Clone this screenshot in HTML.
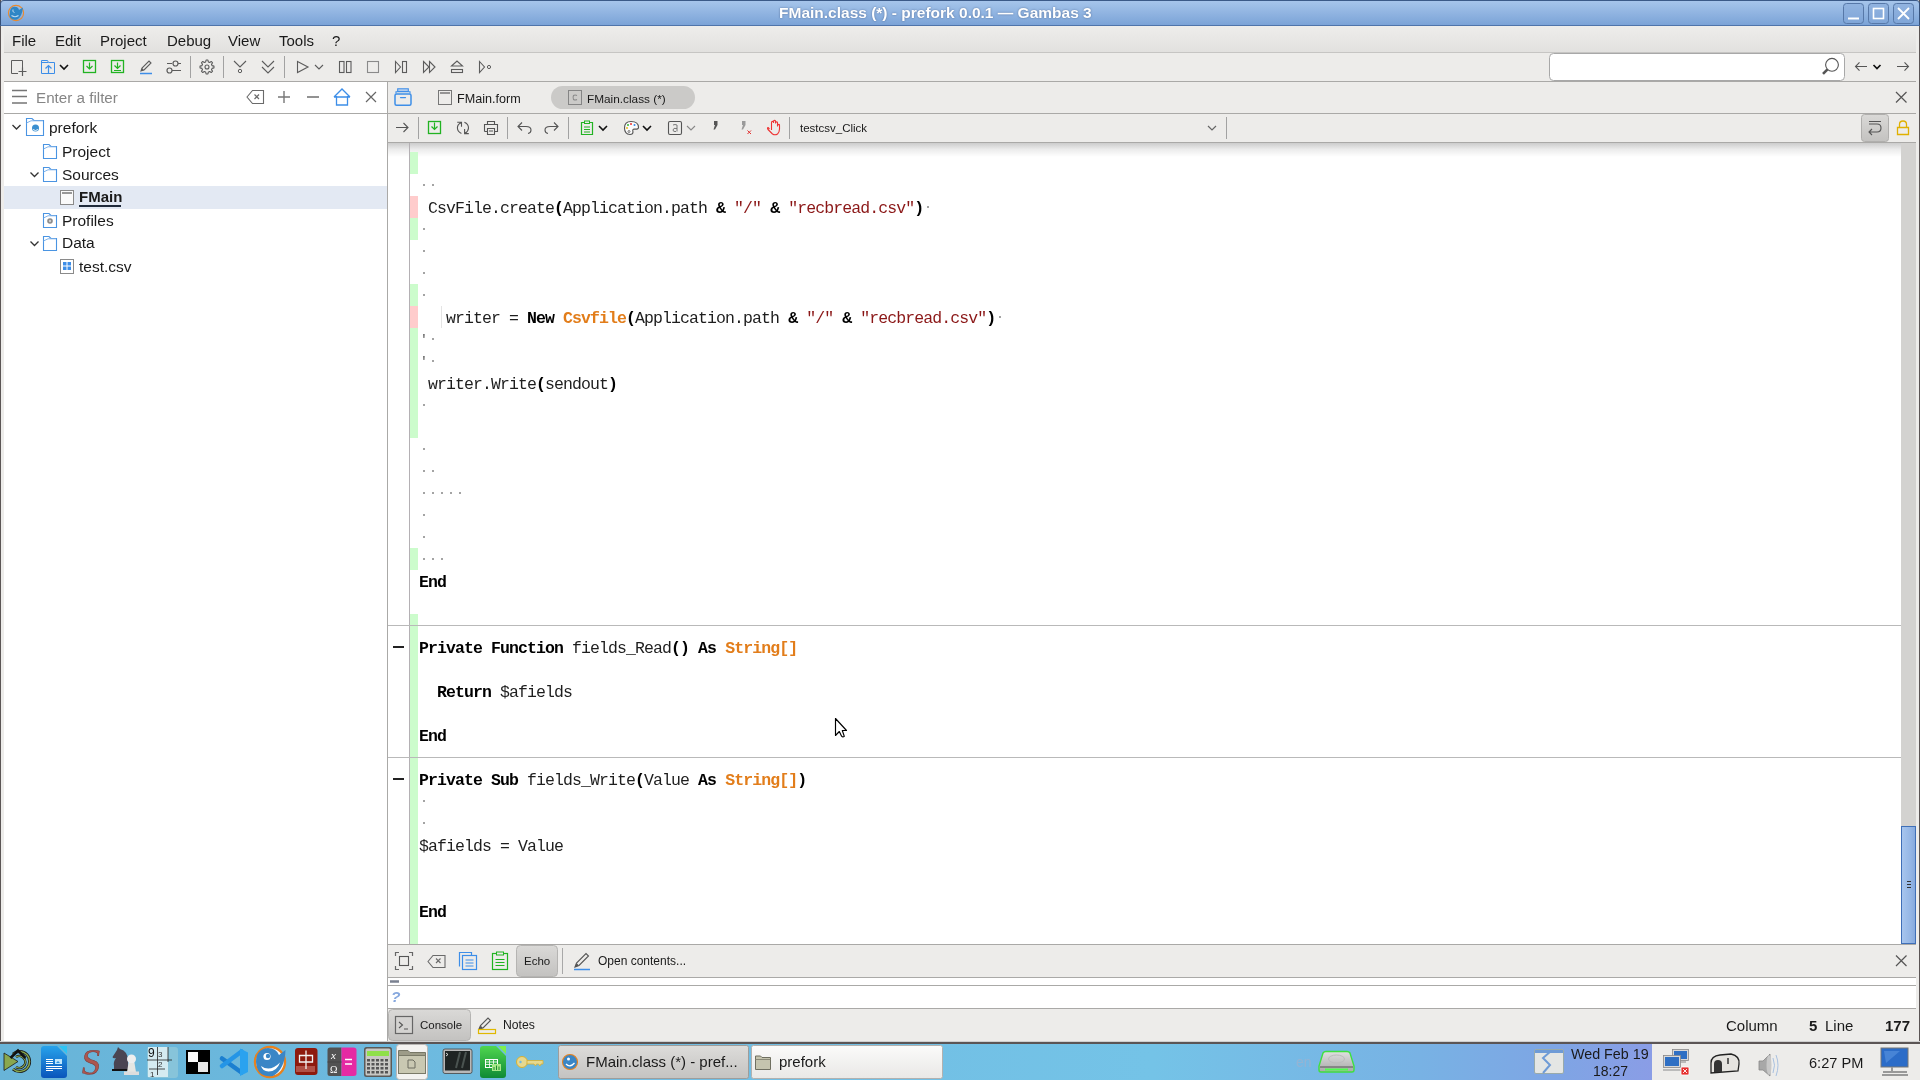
<!DOCTYPE html>
<html><head><meta charset="utf-8">
<style>
*{margin:0;padding:0;box-sizing:border-box}
html,body{width:1920px;height:1080px;overflow:hidden;background:#edecea;font-family:"Liberation Sans",sans-serif;position:relative}
.a{position:absolute}
.t,.code{will-change:transform}
.t{position:absolute;white-space:pre;font-size:15px;color:#1a1a1a;line-height:18px}
.hl{position:absolute;height:1px;background:#aaa9a7}
.vl{position:absolute;width:1px;background:#aaa9a7}
.code{position:absolute;font-family:"Liberation Mono",monospace;font-size:16.5px;letter-spacing:-0.9px;white-space:pre;line-height:22px;padding-top:2px;color:#1e1e1e;left:419px}
.code b{font-weight:bold;color:#000}
.code i{font-style:normal}
.code .s{color:#8b1717}
.code .q{color:#555;font-size:13px;position:relative;top:-2px;left:1px}
.code .o{color:#e27d1a;font-weight:bold}
.tk{position:absolute;top:1044px;height:36px}
</style></head><body>
<!-- window frame -->
<div class="a" style="left:0;top:0;width:1920px;height:1044px;background:#edecea;border-left:1px solid #5b5555;border-right:1px solid #5b5555"></div>
<div class="a" style="left:0;top:0;width:1920px;height:26px;background:linear-gradient(#a6c5eb,#7ba3d7);border-top:1px solid #3b5a88;border-bottom:1px solid #4f74aa;border-left:1px solid #34507a;border-right:1px solid #34507a;border-top-left-radius:4px;border-top-right-radius:4px"></div>
<div class="t" style="left:779px;top:4px;font-size:15.5px;font-weight:bold;color:#fff;text-shadow:0 0 2px rgba(40,60,100,.6)">FMain.class (*) - prefork 0.0.1 — Gambas 3</div>

<div class="a" style="left:4px;top:26px;width:1912px;height:27px;background:linear-gradient(#eeedeb,#e2e1df);border-bottom:1px solid #c6c5c3"></div>
<div class="t" style="left:12px;top:32px">File</div>
<div class="t" style="left:55px;top:32px">Edit</div>
<div class="t" style="left:100px;top:32px">Project</div>
<div class="t" style="left:167px;top:32px">Debug</div>
<div class="t" style="left:228px;top:32px">View</div>
<div class="t" style="left:279px;top:32px">Tools</div>
<div class="t" style="left:332px;top:32px">?</div>

<!-- left panel -->
<div class="a" style="left:4px;top:82px;width:383px;height:959px;background:#fff"></div>
<div class="hl" style="left:4px;top:113px;width:383px"></div>
<div class="hl" style="left:4px;top:81px;width:1912px"></div>
<div class="vl" style="left:387px;top:82px;height:959px"></div>
<div class="a" style="left:4px;top:186px;width:383px;height:23px;background:#e3e9f3"></div>

<!-- right area -->
<div class="hl" style="left:388px;top:113px;width:1528px"></div>
<div class="hl" style="left:388px;top:142px;width:1528px"></div>
<div class="a" style="left:388px;top:143px;width:1513px;height:801px;background:#fff"></div>
<div class="a" style="left:1901px;top:143px;width:15px;height:801px;background:#d3d2d0"></div>
<div class="a" style="left:388px;top:143px;width:1513px;height:14px;background:linear-gradient(rgba(0,0,0,.20),rgba(0,0,0,.08) 45%,rgba(0,0,0,0))"></div>
<div class="vl" style="left:409px;top:143px;height:801px;background:#b4b0b4"></div>
<div class="a" style="left:410px;top:152px;width:8px;height:22px;background:#ccfccc"></div>
<div class="a" style="left:410px;top:196px;width:8px;height:22px;background:#ffcccc"></div>
<div class="a" style="left:410px;top:218px;width:8px;height:22px;background:#ccfccc"></div>
<div class="a" style="left:410px;top:284px;width:8px;height:22px;background:#ccfccc"></div>
<div class="a" style="left:410px;top:306px;width:8px;height:22px;background:#ffcccc"></div>
<div class="a" style="left:410px;top:328px;width:8px;height:110px;background:#ccfccc"></div>
<div class="a" style="left:410px;top:548px;width:8px;height:22px;background:#ccfccc"></div>
<div class="a" style="left:410px;top:614px;width:8px;height:330px;background:#ccfccc"></div>
<div class="a" style="left:423px;top:184px;width:2px;height:2px;background:#a4a4a4"></div>
<div class="a" style="left:432px;top:184px;width:2px;height:2px;background:#a4a4a4"></div>
<div class="a" style="left:423px;top:228px;width:2px;height:2px;background:#a4a4a4"></div>
<div class="a" style="left:423px;top:250px;width:2px;height:2px;background:#a4a4a4"></div>
<div class="a" style="left:423px;top:272px;width:2px;height:2px;background:#a4a4a4"></div>
<div class="a" style="left:423px;top:294px;width:2px;height:2px;background:#a4a4a4"></div>
<div class="a" style="left:432px;top:338px;width:2px;height:2px;background:#a4a4a4"></div>
<div class="a" style="left:432px;top:360px;width:2px;height:2px;background:#a4a4a4"></div>
<div class="a" style="left:423px;top:404px;width:2px;height:2px;background:#a4a4a4"></div>
<div class="a" style="left:423px;top:448px;width:2px;height:2px;background:#a4a4a4"></div>
<div class="a" style="left:423px;top:470px;width:2px;height:2px;background:#a4a4a4"></div>
<div class="a" style="left:432px;top:470px;width:2px;height:2px;background:#a4a4a4"></div>
<div class="a" style="left:423px;top:492px;width:2px;height:2px;background:#a4a4a4"></div>
<div class="a" style="left:432px;top:492px;width:2px;height:2px;background:#a4a4a4"></div>
<div class="a" style="left:441px;top:492px;width:2px;height:2px;background:#a4a4a4"></div>
<div class="a" style="left:450px;top:492px;width:2px;height:2px;background:#a4a4a4"></div>
<div class="a" style="left:459px;top:492px;width:2px;height:2px;background:#a4a4a4"></div>
<div class="a" style="left:423px;top:514px;width:2px;height:2px;background:#a4a4a4"></div>
<div class="a" style="left:423px;top:536px;width:2px;height:2px;background:#a4a4a4"></div>
<div class="a" style="left:423px;top:558px;width:2px;height:2px;background:#a4a4a4"></div>
<div class="a" style="left:432px;top:558px;width:2px;height:2px;background:#a4a4a4"></div>
<div class="a" style="left:441px;top:558px;width:2px;height:2px;background:#a4a4a4"></div>
<div class="a" style="left:423px;top:800px;width:2px;height:2px;background:#a4a4a4"></div>
<div class="a" style="left:423px;top:822px;width:2px;height:2px;background:#a4a4a4"></div>
<div class="a" style="left:927px;top:206px;width:2px;height:2px;background:#a4a4a4"></div>
<div class="a" style="left:999px;top:316px;width:2px;height:2px;background:#a4a4a4"></div>
<div class="code" style="top:196px"> CsvFile.create<b>(</b>Application.path <b>&amp;</b> <i class="s">"/"</i> <b>&amp;</b> <i class="s">"recbread.csv"</i><b>)</b></div>
<div class="code" style="top:306px">   writer = <b>New</b> <i class="o">Csvfile</i><b>(</b>Application.path <b>&amp;</b> <i class="s">"/"</i> <b>&amp;</b> <i class="s">"recbread.csv"</i><b>)</b></div>
<div class="code" style="top:328px"><i class="q">'</i></div>
<div class="code" style="top:350px"><i class="q">'</i></div>
<div class="code" style="top:372px"> writer.Write<b>(</b>sendout<b>)</b></div>
<div class="code" style="top:570px"><b>End</b></div>
<div class="code" style="top:636px"><b>Private</b> <b>Function</b> fields_Read<b>()</b> <b>As</b> <i class="o">String[]</i></div>
<div class="code" style="top:680px">  <b>Return</b> $afields</div>
<div class="code" style="top:724px"><b>End</b></div>
<div class="code" style="top:768px"><b>Private</b> <b>Sub</b> fields_Write<b>(</b>Value <b>As</b> <i class="o">String[]</i><b>)</b></div>
<div class="code" style="top:834px">$afields = Value</div>
<div class="code" style="top:900px"><b>End</b></div>
<div class="a" style="left:441px;top:306px;width:1px;height:22px;background:#e4e4e4"></div>
<div class="a" style="left:388px;top:625px;width:1513px;height:1px;background:#b9b9b9"></div>
<div class="a" style="left:388px;top:757px;width:1513px;height:1px;background:#b9b9b9"></div>
<div class="a" style="left:393px;top:646px;width:11px;height:2px;background:#222"></div>
<div class="a" style="left:393px;top:778px;width:11px;height:2px;background:#222"></div>

<div class="hl" style="left:388px;top:944px;width:1528px"></div>
<div class="hl" style="left:388px;top:977px;width:1528px"></div>
<div class="a" style="left:388px;top:978px;width:1528px;height:30px;background:#fff"></div>
<div class="hl" style="left:388px;top:985px;width:1528px"></div>
<div class="hl" style="left:388px;top:1008px;width:1528px"></div>

<!-- taskbar -->
<div class="a" style="left:0;top:1041px;width:1920px;height:3px;background:#5b5555;border-top:1px solid #cfcfcf"></div>
<div class="a" style="left:0;top:1044px;width:1920px;height:36px;background:linear-gradient(90deg,#68b4d8 0%,#6fbce2 30%,#74c3e7 60%,#78b2e4 74%,#7ea5e4 81%,#8a9de6 86%)"></div>
<div class="a" style="left:1652px;top:1044px;width:268px;height:36px;background:#edecea"></div>

<svg class="a" style="left:0;top:0" width="1920" height="1080" viewBox="0 0 1920 1080"><defs>
<linearGradient id="btng" x1="0" y1="0" x2="0" y2="1"><stop offset="0" stop-color="#dad9d7"/><stop offset="1" stop-color="#c3c2c0"/></linearGradient>
<linearGradient id="thumbg" x1="0" y1="0" x2="1" y2="0"><stop offset="0" stop-color="#a8c6ee"/><stop offset=".6" stop-color="#96b7e6"/><stop offset="1" stop-color="#85a8dc"/></linearGradient>
</defs><path d="M11.5 73.5V60.5H22.5V68M11.5 73.5H18" stroke="#5c5c5c" fill="none"/>
<path d="M22.5 67.5V76M18.5 71.5H26.5" stroke="#5c5c5c" stroke-width="1.2" fill="none"/>
<path d="M41.5 73.5V60.5H47.5L48.5 62.5H54.5V73.5Z" stroke="#3d8ee8" fill="none"/><path d="M41.5 62.5H48" stroke="#3d8ee8" fill="none"/>
<path d="M48.5 73.5V66M45.5 68.5L48.5 65.5L51.5 68.5" stroke="#3d8ee8" stroke-width="1.2" fill="none"/>
<path d="M60 65L64 69L68 65" stroke="#111" stroke-width="1.6" fill="none"/>
<rect x="83.5" y="60.5" width="12" height="12" stroke="#22b322" stroke-width="1.3" fill="none"/>
<path d="M89.5 62.5V69M86.5 66L89.5 69L92.5 66" stroke="#22b322" stroke-width="1.2" fill="none"/>
<rect x="111.5" y="60.5" width="12" height="12" stroke="#22b322" stroke-width="1.3" fill="none"/>
<path d="M117.5 62.5V68M114.5 65.5L117.5 68.5L120.5 65.5M114 70.5H121" stroke="#22b322" stroke-width="1.2" fill="none"/>
<path d="M141 71L142 68L149 61L151 63L144 70Z" stroke="#5c5c5c" stroke-width="1.1" fill="none"/><path d="M141 71L142 68L144 70Z" fill="#5c5c5c"/>
<path d="M140 73.5H152" stroke="#3d8ee8" stroke-width="1.5"/>
<path d="M167 63.5H172M178 63.5H181M172 70.5H181" stroke="#5c5c5c" stroke-width="1.2" fill="none"/><circle cx="175.5" cy="63.5" r="2.5" stroke="#5c5c5c" stroke-width="1.2" fill="none"/><circle cx="169.5" cy="70.5" r="2.5" stroke="#5c5c5c" stroke-width="1.2" fill="none"/>
<path d="M190.5 56V78" stroke="#a2a2a2"/>
<path d="M223.5 56V78" stroke="#a2a2a2"/>
<path d="M284.5 56V78" stroke="#a2a2a2"/>
<path d="M214.00 67.00 L213.94 67.91 L212.02 68.35 L211.80 68.99 L211.50 69.60 L212.55 71.26 L211.95 71.95 L211.26 72.55 L209.60 71.50 L208.99 71.80 L208.35 72.02 L207.91 73.94 L207.00 74.00 L206.09 73.94 L205.65 72.02 L205.01 71.80 L204.40 71.50 L202.74 72.55 L202.05 71.95 L201.45 71.26 L202.50 69.60 L202.20 68.99 L201.98 68.35 L200.06 67.91 L200.00 67.00 L200.06 66.09 L201.98 65.65 L202.20 65.01 L202.50 64.40 L201.45 62.74 L202.05 62.05 L202.74 61.45 L204.40 62.50 L205.01 62.20 L205.65 61.98 L206.09 60.06 L207.00 60.00 L207.91 60.06 L208.35 61.98 L208.99 62.20 L209.60 62.50 L211.26 61.45 L211.95 62.05 L212.55 62.74 L211.50 64.40 L211.80 65.01 L212.02 65.65 L213.94 66.09Z" stroke="#5c5c5c" stroke-width="1.1" fill="none" stroke-linejoin="round"/><circle cx="207" cy="67" r="2" stroke="#5c5c5c" stroke-width="1.1" fill="none"/>
<path d="M234 61L240 67L246 61" stroke="#5c5c5c" stroke-width="1.1" fill="none"/><circle cx="240" cy="71" r="1.7" stroke="#5c5c5c" fill="none"/>
<path d="M262 61L268 67L274 61M262 67L268 73L274 67" stroke="#5c5c5c" stroke-width="1.1" fill="none"/>
<path d="M297.5 61.5L308 67L297.5 72.5Z" stroke="#5c5c5c" stroke-width="1.1" fill="none"/>
<path d="M315 65L319 69L323 65" stroke="#5c5c5c" stroke-width="1.1" fill="none"/>
<rect x="339.5" y="61.5" width="4.5" height="11" stroke="#5c5c5c" stroke-width="1.1" fill="none"/><rect x="346.5" y="61.5" width="4.5" height="11" stroke="#5c5c5c" stroke-width="1.1" fill="none"/>
<rect x="367.5" y="61.5" width="11" height="11" stroke="#8a8a8a" stroke-width="1.1" fill="none"/>
<path d="M395.5 61.5L400.5 67L395.5 72.5Z" stroke="#5c5c5c" stroke-width="1.1" fill="none"/><rect x="402.5" y="61.5" width="4" height="11" stroke="#5c5c5c" stroke-width="1.1" fill="none"/>
<path d="M423.5 61.5L429 67L423.5 72.5ZM429.5 61.5L435 67L429.5 72.5Z" stroke="#5c5c5c" stroke-width="1.1" fill="none"/>
<path d="M451.5 66L457 61L462.5 66Z" stroke="#5c5c5c" stroke-width="1.1" fill="none"/><rect x="451.5" y="69.5" width="11" height="3" stroke="#5c5c5c" stroke-width="1.1" fill="none"/>
<path d="M479.5 61.5L484.5 67L479.5 72.5Z" stroke="#5c5c5c" stroke-width="1.1" fill="none"/><circle cx="489" cy="67" r="1.6" stroke="#5c5c5c" fill="none"/>
<rect x="1549.5" y="53.5" width="295" height="27" rx="4" fill="#fff" stroke="#a8a8a8"/>
<circle cx="1832" cy="64.8" r="6.4" stroke="#555" stroke-width="1.1" fill="none"/><path d="M1827.5 69.3L1823 73.8" stroke="#555" stroke-width="2.6"/>
<path d="M1855.5 66.5H1867M1859.5 62.3L1855.5 66.5L1859.5 70.7" stroke="#555" stroke-width="1.1" fill="none"/>
<path d="M1873.5 65L1877 68.5L1880.5 65" stroke="#111" stroke-width="1.7" fill="none"/>
<path d="M1897 66.5H1908.5M1904.5 62.3L1908.5 66.5L1904.5 70.7" stroke="#555" stroke-width="1.1" fill="none"/>
<rect x="1843.5" y="3.5" width="20" height="20" rx="3" fill="rgba(130,165,215,.5)" stroke="#5778a8"/>
<rect x="1868.5" y="3.5" width="20" height="20" rx="3" fill="rgba(130,165,215,.5)" stroke="#5778a8"/>
<rect x="1893.5" y="3.5" width="20" height="20" rx="3" fill="rgba(130,165,215,.5)" stroke="#5778a8"/>
<path d="M1848 18.5H1859" stroke="#fff" stroke-width="2"/>
<rect x="1873.5" y="8.5" width="10" height="10" stroke="#fff" stroke-width="1.6" fill="none"/>
<path d="M1898 8L1909 19M1909 8L1898 19" stroke="#fff" stroke-width="1.8"/>
<circle cx="16" cy="13" r="7.6" fill="none" stroke="#ea8a2e" stroke-width="1.1"/><path d="M10 11Q11 6.5 15 6.8Q18.5 7.2 19 10L23 7.5Q22 17 17 19.5Q11 20.5 9.5 16Z" fill="#2f86c6"/><path d="M13 9.5Q12 12 14.5 12.5" stroke="#bcd8f0" stroke-width="1" fill="none"/><path d="M11.5 15.5Q15 18 18.5 15.5" stroke="#bcd8f0" stroke-width="1.1" fill="none"/>
<path d="M12 90.5H27M12 96.5H27M12 103H27" stroke="#757575" stroke-width="1.6"/>
<path d="M247 97L252.5 90.5H263.5V103.5H252.5Z" stroke="#6a6a6a" stroke-width="1.1" fill="none"/><path d="M254.5 94.5L259 99M259 94.5L254.5 99" stroke="#6a6a6a" stroke-width="1.2"/>
<path d="M284 91V103M278 97H290" stroke="#777" stroke-width="1.4"/>
<path d="M307 97H319" stroke="#777" stroke-width="1.6"/>
<path d="M334 97L342 89L350 97M336.5 96V105H347.5V96M334 97H350" stroke="#3d8ee8" stroke-width="1.3" fill="none"/>
<path d="M366 92L376 102M376 92L366 102" stroke="#666" stroke-width="1.2"/>
<rect x="395" y="94" width="16" height="11.3" rx="1.5" stroke="#3d8ee8" stroke-width="1.5" fill="none"/><path d="M396 93.5V91.8H410V93.5" stroke="#3d8ee8" stroke-width="1.1" fill="none"/><rect x="397.7" y="88.8" width="10.6" height="2.6" stroke="#3d8ee8" stroke-width="1.1" fill="#c6d8ee"/><path d="M400.5 97.6H405.5" stroke="#3d8ee8" stroke-width="1.2" stroke-linecap="round"/>
<rect x="438.5" y="90.5" width="13" height="14" stroke="#777" fill="none"/><path d="M440 93H450" stroke="#777" stroke-width="1.5"/>
<rect x="551" y="86" width="144" height="23" rx="11.5" fill="#cbcac8"/>
<rect x="568.5" y="90.5" width="13" height="14" stroke="#858585" fill="none"/><path d="M577 95.5Q575 94.5 573.5 95.5Q572.5 97.5 573.5 99.5Q575 100.5 577 99.5" stroke="#8a8a8a" stroke-width="1.1" fill="none"/>
<path d="M1896 92L1906.5 102.5M1906.5 92L1896 102.5" stroke="#555" stroke-width="1.2"/>
<path d="M396 127.5H408M403.5 123L408 127.5L403.5 132" stroke="#555" stroke-width="1.1" fill="none"/>
<path d="M418.5 117V139" stroke="#a2a2a2"/>
<path d="M507.5 117V139" stroke="#a2a2a2"/>
<path d="M568.5 117V139" stroke="#a2a2a2"/>
<rect x="428.5" y="121.5" width="12" height="12" stroke="#22b322" stroke-width="1.3" fill="none"/><path d="M434.5 122.5V129.5M431.5 126.5L434.5 129.5L437.5 126.5" stroke="#22b322" stroke-width="1.2" fill="none"/>
<path d="M457.2 122.3H461.5V126.7M461.2 122.6Q457.4 124.5 457.4 128Q457.6 131.8 461.4 133.4M464.4 122.3Q468.5 124 468.5 128Q468.3 131.5 465 133.3M464.6 129V133.6H468.8" stroke="#555" stroke-width="1.1" fill="none"/>
<path d="M487.5 124.5V121.5H494.5V124.5M484.5 131.5V124.5H497.5V131.5H494.5M487.5 131.5H484.5M487.5 128.5H494.5V134.5H487.5ZM489 131H493" stroke="#555" stroke-width="1.1" fill="none"/>
<path d="M518 126.5H526Q531 126.5 531 130Q531 133 528 133.5M522 122.5L518 126.5L522 130.5" stroke="#555" stroke-width="1.1" fill="none"/>
<path d="M558 126.5H550Q545 126.5 545 130Q545 133 548 133.5M554 122.5L558 126.5L554 130.5" stroke="#555" stroke-width="1.1" fill="none"/>
<path d="M581.5 122.5H592.5V134.5H581.5Z" stroke="#22b322" stroke-width="1.2" fill="none"/><rect x="584.5" y="121" width="5" height="2.5" stroke="#22b322" fill="#edecea"/><path d="M584 127H590M584 129.5H590M584 132H590" stroke="#22b322" stroke-width="1"/>
<path d="M599 126L603 130L607 126" stroke="#111" stroke-width="1.6" fill="none"/>
<path d="M643 126L647 130L651 126" stroke="#111" stroke-width="1.6" fill="none"/>
<path d="M687 126L691 130L695 126" stroke="#888" stroke-width="1.1" fill="none"/>
<path d="M631 121.5Q638.5 121.5 638.5 127.5Q638.5 129.5 634.5 129Q632 129 633 132Q633 134.5 630 134.5Q624.5 134 624.5 128Q624.5 121.5 631 121.5Z" stroke="#555" stroke-width="1.1" fill="#fbfbfb"/><circle cx="628" cy="125" r="1" fill="#33bb33"/><circle cx="631" cy="124" r="1" fill="#ee3333"/><circle cx="634.5" cy="125" r="1" fill="#3388ee"/><circle cx="627" cy="128" r="1" fill="#eebb22"/><circle cx="629" cy="131.5" r="1" stroke="#555" stroke-width=".8" fill="none"/>
<rect x="668.5" y="121.5" width="13" height="13" rx="1.5" stroke="#555" stroke-width="1.1" fill="none"/><path d="M673 125Q675 124 677 125V131.5M677 128.5Q673 127.5 673 130Q673 132 676 131.5" stroke="#777" stroke-width="1" fill="none"/>
<path d="M714 121H717.5V125L715 129.5H713.5L715 125H714Z" fill="#555"/>
<path d="M742 121H745.5V125L743 129.5H741.5L743 125H742Z" fill="#9a9a9a"/><path d="M747.5 130.5L751 134M751 130.5L747.5 134" stroke="#e03030" stroke-width="1"/>
<path d="M769.5 129L768 127.5Q767 128 768 129.5L772.5 134Q775 135.5 777.5 134Q779.5 132 779.5 129V125.5Q779.5 124 778.5 124.5Q777.5 125 777.5 126V123Q777.5 121.5 776 122Q775.5 122.5 775.5 123V121.5Q775.5 120 774 120.5Q773.5 121 773.5 122V122.5Q773.5 121 772 121.5Q771.5 122 771.5 123V130" stroke="#e33" stroke-width="1.1" fill="none" stroke-linejoin="round"/>
<path d="M789.5 117V139" stroke="#a2a2a2"/>
<path d="M1208 126L1212 130L1216 126" stroke="#666" stroke-width="1.2" fill="none"/><path d="M1226.5 117V139" stroke="#a2a2a2"/>
<rect x="1861.5" y="114.5" width="27" height="27" rx="3" fill="url(#btng)" stroke="#b0afad"/>
<path d="M1869 121.5H1881M1869 124H1877Q1881 124 1881 128Q1881 132 1877 132H1869M1872 129L1869 132L1872 135" stroke="#555" stroke-width="1.1" fill="none"/>
<path d="M1897.5 134.5V127.5H1908.5V134.5ZM1899.5 127.5V124.5Q1899.5 121 1903 121Q1906.5 121 1906.5 124.5V127.5" stroke="#e0b000" stroke-width="1.3" fill="none"/>
<path d="M12.5 125L16.5 129L20.5 125" stroke="#333" stroke-width="1.3" fill="none"/>
<path d="M30.5 172.5L34.5 176.5L38.5 172.5" stroke="#333" stroke-width="1.3" fill="none"/>
<path d="M30.5 241.5L34.5 245.5L38.5 241.5" stroke="#333" stroke-width="1.3" fill="none"/>
<path d="M26.5 135.5V118.5H32L34 120.5H43.5V135.5Z" stroke="#4a94e2" stroke-width="1.1" fill="#fff"/><path d="M26.5 123L31 120.8H43" stroke="#7fb3ea" stroke-width="1" fill="none"/>
<circle cx="35.5" cy="128" r="3.5" fill="#3a8fd0"/><path d="M33 129.5Q35.5 131.5 38 129.5" stroke="#fff" stroke-width=".9" fill="none"/>
<path d="M43.5 158.5V144.5H49L51 146.5H56.5V158.5Z" stroke="#4a94e2" stroke-width="1.1" fill="#fff"/><path d="M43.5 149L48 146.8H56" stroke="#7fb3ea" stroke-width="1" fill="none"/>
<path d="M43.5 181.5V167.5H49L51 169.5H56.5V181.5Z" stroke="#4a94e2" stroke-width="1.1" fill="#fff"/><path d="M43.5 172L48 169.8H56" stroke="#7fb3ea" stroke-width="1" fill="none"/>
<path d="M43.5 227.5V213.5H49L51 215.5H56.5V227.5Z" stroke="#4a94e2" stroke-width="1.1" fill="#fff"/><path d="M43.5 218L48 215.8H56" stroke="#7fb3ea" stroke-width="1" fill="none"/>
<path d="M43.5 250.5V236.5H49L51 238.5H56.5V250.5Z" stroke="#4a94e2" stroke-width="1.1" fill="#fff"/><path d="M43.5 241L48 238.8H56" stroke="#7fb3ea" stroke-width="1" fill="none"/>
<circle cx="50" cy="221" r="2.8" fill="#8a8a8a"/><circle cx="50" cy="221" r="1.2" fill="#ccc"/>
<rect x="60.5" y="190.5" width="13" height="14" stroke="#8a8a8a" fill="#fafafa"/><path d="M62 193H72" stroke="#777" stroke-width="1.5"/>
<rect x="60.5" y="259.5" width="13" height="14" stroke="#8a8a8a" fill="#fff"/><rect x="63" y="262" width="8" height="8" fill="#3d8ee8"/><path d="M63 266H71M67 262V270" stroke="#fff" stroke-width="1"/>
<path d="M395.5 956V952.5H399M409 952.5H412.5V956M412.5 966V969.5H409M399 969.5H395.5V966" stroke="#666" stroke-width="1.2" fill="none"/><rect x="399.5" y="956.5" width="9" height="9" stroke="#555" stroke-width="1.1" fill="none"/>
<path d="M428 961.5L433 955.5H445V967.5H433Z" stroke="#6a6a6a" stroke-width="1.1" fill="none"/><path d="M436 958.5L440.5 963M440.5 958.5L436 963" stroke="#6a6a6a" stroke-width="1.1"/>
<path d="M459.5 966.5V952.5H471.5V955" stroke="#3d8ee8" stroke-width="1.2" fill="none"/><rect x="462.5" y="955.5" width="14" height="14" stroke="#3d8ee8" stroke-width="1.2" fill="#edecea"/><path d="M465.5 960H473.5M465.5 963H473.5M465.5 966H473.5" stroke="#3d8ee8"/>
<rect x="492.5" y="953.5" width="15" height="16" stroke="#22b322" stroke-width="1.2" fill="none"/><rect x="496.5" y="952" width="7" height="3" stroke="#22b322" fill="#edecea"/><path d="M495.5 959.5H504.5M495.5 962.5H504.5M495.5 965.5H504.5" stroke="#22b322"/>
<rect x="516.5" y="945.5" width="41" height="31" rx="4" fill="url(#btng)" stroke="#b5b4b2"/>
<path d="M562.5 948V974" stroke="#a8a8a8"/>
<path d="M575 967L576.5 963L586 953.5L588.5 956L579 965.5Z" stroke="#555" stroke-width="1.1" fill="none"/><path d="M575 967L576.5 963L579 965.5Z" fill="#555"/><path d="M574 969.5H590" stroke="#3d8ee8" stroke-width="1.5"/>
<path d="M390 981.5H399" stroke="#7a8190" stroke-width="2.5"/>
<rect x="388.5" y="1009.5" width="82" height="31" rx="4" fill="url(#btng)" stroke="#b5b4b2"/>
<rect x="395.5" y="1016.5" width="17" height="17" stroke="#666" stroke-width="1.2" fill="#d4d3d1"/><path d="M399 1022L402.5 1025L399 1028M404 1029H408" stroke="#555" stroke-width="1.1" fill="none"/>
<path d="M479 1029L480.5 1025.5L488 1018L490.5 1020.5L483 1028Z" stroke="#555" stroke-width="1.1" fill="none"/><path d="M479 1029L480.5 1025.5L483 1028Z" fill="#555"/><rect x="478.5" y="1029.5" width="17" height="4" stroke="#e0b800" stroke-width="1.2" fill="none"/>
<rect x="1901.5" y="826.5" width="14" height="117" fill="url(#thumbg)" stroke="#3f6fb8"/><path d="M1907 881.5H1911M1907 884.5H1911M1907 887.5H1911" stroke="#333" stroke-width="1"/>
<path d="M1896 955.5L1906.5 966M1906.5 955.5L1896 966" stroke="#555" stroke-width="1.2"/>
<path d="M835.5 718.5V735.5L839.3 731.5L841.6 736.2Q842.8 737.6 844.3 736.4L842.3 730.5H846.5Z" fill="#fff" stroke="#000" stroke-width="1.15" stroke-linejoin="round"/>
<path d="M4 1053L18 1061.5L4 1070.5Z" fill="#8aa84e" stroke="#1a1a1a" stroke-width=".8"/>
<path d="M13 1054A10 10 0 1 1 13 1069" stroke="#1a1a1a" stroke-width="3" fill="none"/><path d="M13 1054A10 10 0 1 1 13 1069" stroke="#8aa84e" stroke-width="1.5" fill="none"/>
<path d="M16 1057A6 6 0 1 1 16 1067" stroke="#1a1a1a" stroke-width="2.6" fill="none"/><path d="M16 1057A6 6 0 1 1 16 1067" stroke="#8aa84e" stroke-width="1.2" fill="none"/>
<path d="M10.5 1058L18 1050.5L25.5 1058" stroke="#111" stroke-width="2.6" fill="none"/>
<defs><linearGradient id="wr" x1="0" y1="0" x2="0" y2="1"><stop offset="0" stop-color="#27a2ea"/><stop offset="1" stop-color="#0a55bb"/></linearGradient><linearGradient id="cl" x1="0" y1="0" x2="0" y2="1"><stop offset="0" stop-color="#4fd64f"/><stop offset="1" stop-color="#0f8a35"/></linearGradient></defs>
<path d="M44 1046H57L67 1056V1075Q67 1078 64 1078H44Q41 1078 41 1075V1049Q41 1046 44 1046Z" fill="url(#wr)"/><path d="M59 1046H67V1054Z" fill="#2bc4f5"/>
<path d="M46 1059.5H53M46 1061.5H53M46 1063.5H53M46 1066.5H62M46 1068.5H62M46 1070.5H53" stroke="#fff" stroke-width="1"/><rect x="55" y="1059" width="7" height="5" fill="#bfe6fb"/><path d="M56 1063L58 1061L60 1063Z" fill="#2a8fe0"/>
<text x="80" y="1074" font-family="Liberation Serif" font-size="36" fill="#ac5650" stroke="#7a3430" stroke-width=".5" transform="matrix(1 0 -0.12 1 128.9 0)">S</text>
<path d="M114 1070V1066Q113 1062 116 1058Q113 1059 112.5 1057L117 1050L118 1047L120 1049Q128 1051 128 1061V1070Z" fill="#4a4552"/><rect x="112" y="1069" width="17" height="2" fill="#111"/>
<circle cx="131.5" cy="1059" r="4.5" fill="#eee"/><path d="M128.5 1063H134.5L136 1072H127Z" fill="#e6e6e2"/><rect x="124" y="1071.5" width="15" height="3.5" fill="#ddd"/>
<rect x="147" y="1047" width="31" height="31" rx="3" fill="#9fd0d8" opacity=".55"/><rect x="148" y="1047" width="20" height="30" fill="#eaf4f6" opacity=".8"/>
<text x="148" y="1057" font-family="Liberation Sans" font-size="12" fill="#111">9</text><text x="158" y="1057" font-family="Liberation Sans" font-size="8" fill="#333">3</text><text x="158" y="1067" font-family="Liberation Sans" font-size="8" fill="#333">2</text><text x="150" y="1077" font-family="Liberation Sans" font-size="8" fill="#333">1</text>
<path d="M147 1060H172M149 1069H165M157.5 1047V1075M168 1047V1062" stroke="#222" stroke-width=".8"/>
<rect x="186" y="1050" width="24" height="24" fill="#000"/><rect x="188" y="1052" width="10" height="10" fill="#fafafa"/><rect x="198" y="1062" width="10" height="10" fill="#e8e8e8"/>
<path d="M222 1058.5L241.5 1072.5" stroke="#1b7fd0" stroke-width="4.6" stroke-linecap="round"/><path d="M222 1066L241.5 1051.5" stroke="#2595e6" stroke-width="4.6" stroke-linecap="round"/><path d="M240 1048.5L248 1052.5V1072L240 1076Z" fill="#2aa2ef"/>
<circle cx="270" cy="1062" r="15" fill="#f4f8fc" stroke="#e8821e" stroke-width="2.4"/><path d="M256 1062Q256 1049 268 1048Q276 1048 279 1055L285.5 1050Q285 1069 273 1076Q257 1078 256 1062Z" fill="#3a86c6"/><path d="M261 1066Q270 1072.5 280 1062.5Q277 1071.5 268.5 1071.5Q262.5 1071 261 1066Z" fill="#fff"/><circle cx="267" cy="1056.5" r="3.6" fill="#fff"/><circle cx="268" cy="1056" r="2.2" fill="#3a86c6"/>
<rect x="295" y="1048" width="22.5" height="27" rx="3" fill="#8e1a0e"/><rect x="296" y="1066" width="19" height="6" fill="#c06a60" opacity=".7"/><path d="M306 1050.5V1069M299.5 1055.5H312.5V1062H299.5Z" stroke="#f3f3f3" stroke-width="1.3" fill="none"/>
<path d="M341.5 1047.5H330Q327.5 1047.5 327.5 1050V1073.5Q327.5 1076 330 1076H341.5Z" fill="#525252"/><path d="M341.5 1047.5H353.5Q356.5 1047.5 356.5 1050V1073.5Q356.5 1076 353.5 1076H341.5Z" fill="#e52aa3"/><path d="M345 1059.5H352M345 1064H352" stroke="#fff" stroke-width="1.6"/><path d="M327.5 1062H341.5" stroke="#444"/>
<text x="331" y="1059" font-family="Liberation Serif" font-style="italic" font-size="11" fill="#fff">x</text><text x="330" y="1073" font-family="Liberation Serif" font-size="10" fill="#fff">Ω</text>
<rect x="364" y="1047" width="28" height="30" rx="2.5" fill="#5a5a58"/><rect x="365.5" y="1048.5" width="25" height="27" rx="1.5" fill="#c8c8c4"/><rect x="367" y="1051" width="22" height="5" fill="#8fe04a"/>
<rect x="367.0" y="1059" width="3" height="2.5" fill="#555"/>
<rect x="371.5" y="1059" width="3" height="2.5" fill="#555"/>
<rect x="376.0" y="1059" width="3" height="2.5" fill="#555"/>
<rect x="380.5" y="1059" width="3" height="2.5" fill="#555"/>
<rect x="385.0" y="1059" width="3" height="2.5" fill="#555"/>
<rect x="367.0" y="1063" width="3" height="2.5" fill="#555"/>
<rect x="371.5" y="1063" width="3" height="2.5" fill="#555"/>
<rect x="376.0" y="1063" width="3" height="2.5" fill="#555"/>
<rect x="380.5" y="1063" width="3" height="2.5" fill="#555"/>
<rect x="385.0" y="1063" width="3" height="2.5" fill="#555"/>
<rect x="367.0" y="1067" width="3" height="2.5" fill="#555"/>
<rect x="371.5" y="1067" width="3" height="2.5" fill="#555"/>
<rect x="376.0" y="1067" width="3" height="2.5" fill="#555"/>
<rect x="380.5" y="1067" width="3" height="2.5" fill="#555"/>
<rect x="385.0" y="1067" width="3" height="2.5" fill="#555"/>
<rect x="367.0" y="1071" width="3" height="2.5" fill="#555"/>
<rect x="371.5" y="1071" width="3" height="2.5" fill="#555"/>
<rect x="376.0" y="1071" width="3" height="2.5" fill="#555"/>
<rect x="380.5" y="1071" width="3" height="2.5" fill="#555"/>
<rect x="385.0" y="1071" width="3" height="2.5" fill="#555"/>
<rect x="396.5" y="1044.5" width="31" height="35" rx="3" fill="#f4f3f1" stroke="#b8b7b5"/>
<path d="M398.5 1050.5H408L410 1052.5H425.5V1073.5H398.5Z" fill="#9d9c88" stroke="#777766"/><rect x="398.5" y="1055.5" width="27" height="18" fill="#c9c8b2" stroke="#7a7a68"/><path d="M408 1060V1068H415V1062L413 1060Z" stroke="#6d6d60" fill="none"/>
<rect x="443" y="1049" width="29" height="24.5" rx="2" fill="#b8b8b8" stroke="#444" stroke-width=".8"/><rect x="445" y="1051" width="25" height="19.5" fill="#1f2423"/><path d="M446 1053L448 1054.5L446 1056" stroke="#fff" stroke-width=".8" fill="none"/><path d="M456 1068L460 1052M462 1068L466 1052" stroke="#4a5350" stroke-width="2"/>
<path d="M483 1046H496L506 1056V1075Q506 1078 503 1078H483Q480 1078 480 1075V1049Q480 1046 483 1046Z" fill="url(#cl)"/><path d="M498 1046H506V1054Z" fill="#7df04e"/>
<rect x="485.5" y="1059.5" width="12" height="8" stroke="#fff" fill="none"/><path d="M485.5 1062H497.5M485.5 1064.5H497.5M489.5 1059.5V1067.5M493.5 1059.5V1067.5" stroke="#fff" stroke-width=".8"/><rect x="492" y="1064" width="9" height="7" fill="#a7e98a"/><path d="M494 1070V1067M496.5 1070V1065.5M499 1070V1066.5" stroke="#1a8a2a" stroke-width="1"/>
<circle cx="522" cy="1062" r="5.5" fill="#e6d890" stroke="#d8b030" stroke-width="1"/><circle cx="520.5" cy="1062" r="1.2" fill="#72b8e0"/><path d="M527 1060.5H543V1064H541L540 1066L538.5 1064H536.5L535.5 1066L534 1064H527Z" fill="#e6d890" stroke="#d8b030" stroke-width=".8"/>
<rect x="558.5" y="1045.5" width="190" height="33" rx="2" fill="url(#tb1)" stroke="#9e9d9b"/><rect x="751.5" y="1045.5" width="191" height="33" rx="2" fill="url(#tb2)" stroke="#b2b1af"/>
<defs><linearGradient id="tb1" x1="0" y1="0" x2="0" y2="1"><stop offset="0" stop-color="#dddcda"/><stop offset="1" stop-color="#c4c3c1"/></linearGradient><linearGradient id="tb2" x1="0" y1="0" x2="0" y2="1"><stop offset="0" stop-color="#fbfbfa"/><stop offset="1" stop-color="#e9e8e6"/></linearGradient><linearGradient id="hd" x1="0" y1="0" x2="0" y2="1"><stop offset="0" stop-color="#e0e0e0"/><stop offset="1" stop-color="#a8a8a8"/></linearGradient></defs>
<circle cx="570" cy="1062" r="7.5" fill="#3a86c6" stroke="#e8821e" stroke-width="1.1"/><path d="M566 1064Q570 1068 574.5 1063" stroke="#fff" stroke-width="1.3" fill="none"/><circle cx="568.5" cy="1059" r="1.5" fill="#fff"/>
<path d="M755.5 1069.5V1056H760.5L762 1057.5H770.5V1069.5Z" fill="#c5c4ae" stroke="#6f6f60"/><path d="M755.5 1059.5H770.5" stroke="#8a8a78"/>
<path d="M1326 1051.5H1347Q1349 1051.5 1350 1053L1354 1066V1070Q1354 1072 1352 1072H1321Q1319 1072 1319 1070V1066L1323 1053Q1324 1051.5 1326 1051.5Z" fill="url(#hd)" stroke="#3ee03e" stroke-width="1.4"/><path d="M1320 1067H1353" stroke="#555" stroke-width="1"/><path d="M1325 1069.5H1348" stroke="#4cff4c" stroke-width="2"/><ellipse cx="1336.5" cy="1059" rx="8" ry="4" stroke="#bbb" fill="none"/>
<rect x="1534.5" y="1049.5" width="29" height="24" rx="1.5" fill="#e4e6e4" stroke="#9aa"/><rect x="1535" y="1050" width="28" height="3" fill="#6e9bd6"/><path d="M1551 1051L1543 1058L1550 1065L1543 1073" stroke="#6e9bd6" stroke-width="2" fill="none"/>
<rect x="1672.5" y="1049.5" width="16" height="11" fill="#d8d8d8" stroke="#888" stroke-width=".8"/><rect x="1674" y="1051" width="13" height="8" fill="#2e6fc4"/><path d="M1676 1062H1686" stroke="#aaa" stroke-width="1.5"/>
<rect x="1663.5" y="1055.5" width="17" height="12" fill="#d8d8d8" stroke="#888" stroke-width=".8"/><rect x="1665" y="1057" width="14" height="9" fill="#2e6fc4"/><path d="M1663 1070H1682" stroke="#bbb" stroke-width="2"/>
<rect x="1681" y="1067" width="8" height="8" rx="1" fill="#e53030" stroke="#fff" stroke-width=".8"/><path d="M1683 1069L1687 1073M1687 1069L1683 1073" stroke="#fff" stroke-width=".9"/>
<path d="M1711 1073V1063Q1711 1056 1720 1055L1731 1054Q1740 1056 1739 1064L1738 1071Z" fill="#e6e4e0" stroke="#222" stroke-width="1.3"/><path d="M1714 1072V1064Q1714 1060 1718 1060Q1722 1060 1722 1064V1072" fill="#333"/><path d="M1728 1058V1064" stroke="#333" stroke-width="1.5"/>
<path d="M1759 1061H1763L1770 1054V1076L1763 1070H1759Z" fill="#a8a8a8" stroke="#888" stroke-width=".8"/><ellipse cx="1769" cy="1065" rx="2.5" ry="10" fill="#c8c8c8"/><path d="M1773 1058Q1776 1065 1773 1073M1776 1055Q1780 1065 1776 1076" stroke="#a8c0e0" stroke-width="1" fill="none"/>
<rect x="1881" y="1048" width="27" height="19" fill="#2b6cc8" stroke="#777" stroke-width="1"/><path d="M1884 1051L1900 1051L1886 1063Z" fill="#5a95e0" opacity=".6"/><path d="M1892 1067V1071M1883 1072H1907M1882 1075H1908" stroke="#999" stroke-width="2"/>
</svg>


<!-- texts -->
<div class="t" style="left:36px;top:89px;font-size:15.2px;color:#858585">Enter a filter</div>
<div class="t" style="left:457px;top:92px;font-size:12.6px;line-height:14px">FMain.form</div>
<div class="t" style="left:587px;top:92px;font-size:11.8px;line-height:14px">FMain.class (*)</div>
<div class="t" style="left:800px;top:121px;font-size:11.5px;line-height:14px">testcsv_Click</div>
<div class="t" style="left:49px;top:119px;font-size:15.5px">prefork</div>
<div class="t" style="left:62px;top:143px;font-size:15.5px">Project</div>
<div class="t" style="left:62px;top:166px;font-size:15.5px">Sources</div>
<div class="t" style="left:79px;top:188px;font-size:15px;font-weight:bold">FMain</div><div class="a" style="left:79px;top:205px;width:42px;height:2px;background:#1f2a3a"></div>
<div class="t" style="left:62px;top:212px;font-size:15.5px">Profiles</div>
<div class="t" style="left:62px;top:234px;font-size:15.5px">Data</div>
<div class="t" style="left:79px;top:258px;font-size:15.5px">test.csv</div>

<div class="t" style="left:524px;top:954px;font-size:11.5px;line-height:14px">Echo</div>
<div class="t" style="left:598px;top:954px;font-size:12px;line-height:14px">Open contents...</div>
<div class="t" style="left:391px;top:988px;font-size:15.5px;font-style:italic;font-weight:bold;color:#86a8de">?</div>
<div class="t" style="left:420px;top:1018px;font-size:11.5px;line-height:14px">Console</div>
<div class="t" style="left:503px;top:1018px;font-size:12.2px;line-height:14px">Notes</div>
<div class="t" style="left:1726px;top:1017px">Column</div>
<div class="t" style="left:1809px;top:1017px;font-weight:bold">5</div>
<div class="t" style="left:1825px;top:1017px">Line</div>
<div class="t" style="left:1885px;top:1017px;font-weight:bold">177</div>
<div class="t" style="left:586px;top:1053px;font-size:15px">FMain.class (*) - pref...</div>
<div class="t" style="left:779px;top:1053px;font-size:15px">prefork</div>
<div class="t" style="left:1296px;top:1053px;font-size:14px;color:#94b4d4">en</div>
<div class="t" style="left:1571px;top:1046px;font-size:14.3px;line-height:16px">Wed Feb 19</div>
<div class="t" style="left:1593px;top:1063px;font-size:14px;line-height:16px">18:27</div>
<div class="t" style="left:1809px;top:1054px;font-size:14.6px">6:27 PM</div>
</body></html>
